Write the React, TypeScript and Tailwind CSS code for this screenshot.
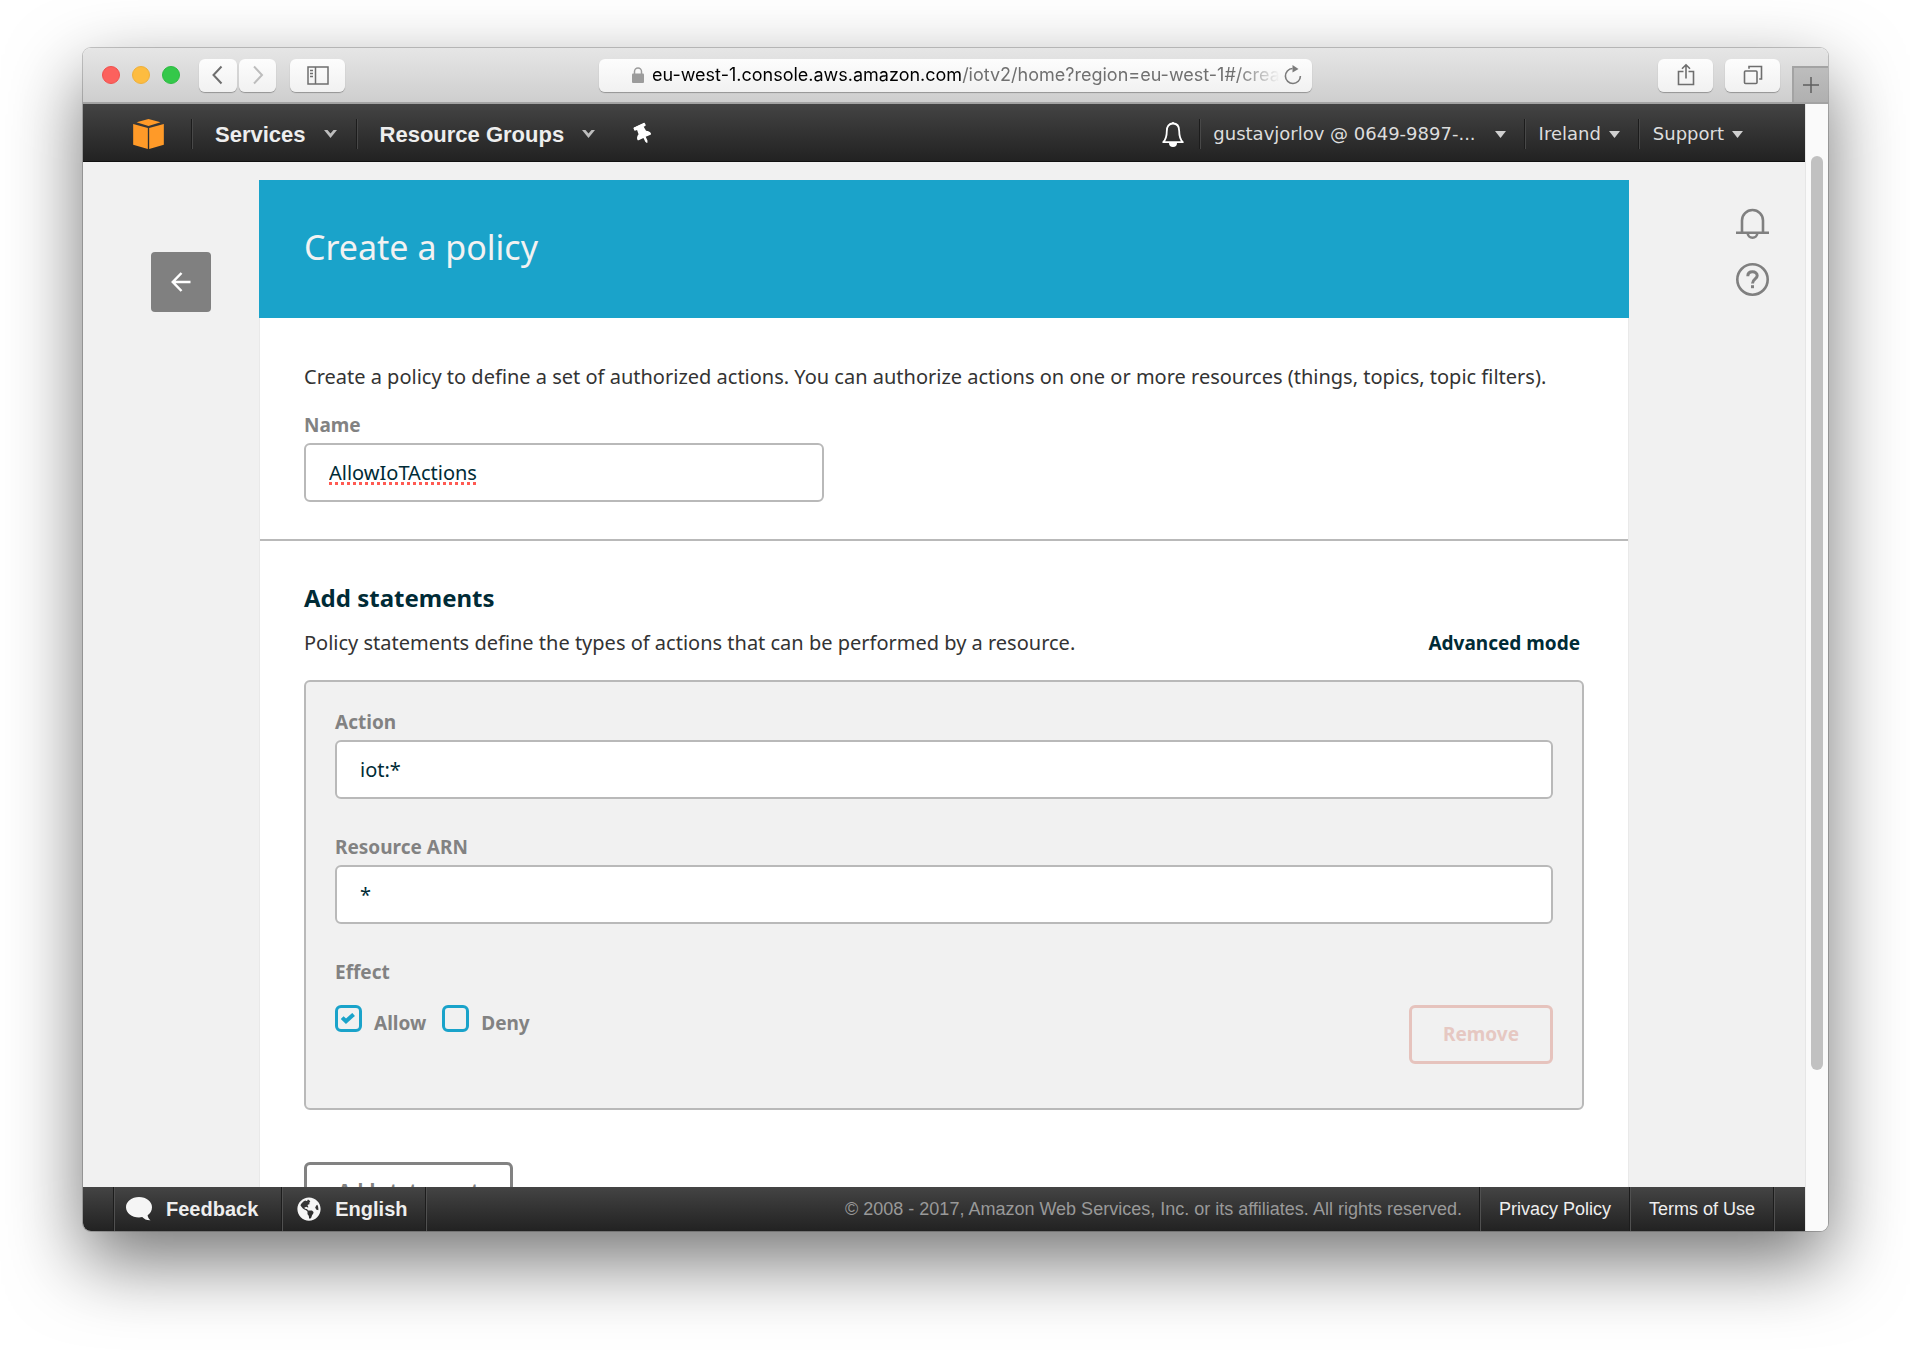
import { useState } from 'react';
import type { ReactNode } from 'react';
import { FaGlobeAmericas, FaThumbtack } from 'react-icons/fa';

function ToolbarButton({ label, className, children }: { label: string; className: string; children: ReactNode }) {
	return (
		<button
			type="button"
			aria-label={label}
			className={`flex h-[33px] items-center justify-center rounded-md bg-gradient-to-b from-[#fdfdfd] to-[#f1f1f1] shadow-[0_1px_1px_rgba(0,0,0,0.3)] ${className}`}
		>
			{children}
		</button>
	);
}

function TitleBar() {
	return (
		<div className="grid h-14 shrink-0 grid-cols-[1fr_713px_1fr] items-center border-b-2 border-[#a3a3a3] bg-gradient-to-b from-[#e6e6e6] to-[#cecece]">
			<div className="flex items-center pl-[19px]">
				<div className="flex gap-3">
					<span className="size-[18px] rounded-full border border-[#f0504d] bg-[#fc615d]" />
					<span className="size-[18px] rounded-full border border-[#eeb03a] bg-[#fdbc40]" />
					<span className="size-[18px] rounded-full border border-[#2cbb41] bg-[#34c84a]" />
				</div>
				<div className="ml-[19px] flex gap-[2px]">
					<ToolbarButton label="Back" className="w-[38px]">
						<svg width="12" height="20" viewBox="0 0 12 20" fill="none" stroke="#6e6e6e" strokeWidth="2">
							<path d="M9.500 1.500 1.500 10l8 8.500" />
						</svg>
					</ToolbarButton>
					<ToolbarButton label="Forward" className="w-[37px]">
						<svg width="12" height="20" viewBox="0 0 12 20" fill="none" stroke="#bdbdbd" strokeWidth="2">
							<path d="M2 1.500 10 10l-8 8.500" />
						</svg>
					</ToolbarButton>
				</div>
				<ToolbarButton label="Show sidebar" className="ml-[14px] w-[55px]">
					<svg width="22" height="19" viewBox="0 0 22 19" fill="none" stroke="#6e6e6e" strokeWidth="1.500">
						<path d="M1 1h20v17H1zM8.500 1v17M3 4.500h3M3 7.500h3M3 10.500h3" />
					</svg>
				</ToolbarButton>
			</div>
			<div className="flex h-[33px] items-center rounded-md bg-gradient-to-b from-[#fdfdfd] to-[#f1f1f1] pr-[10px] pl-[33px] shadow-[0_1px_1px_rgba(0,0,0,0.3)]">
				<svg width="12" height="16" viewBox="0 0 12 16" className="shrink-0">
					<rect x="0" y="6.500" width="12" height="9.500" rx="1" fill="#9b9b9b" />
					<path d="M2.500 7V4.500a3.500 3.500 0 0 1 7 0V7" fill="none" stroke="#9b9b9b" strokeWidth="1.500" />
				</svg>
				<div className="ml-2 flex-1 font-['Inter',sans-serif] text-lg leading-7 whitespace-nowrap text-[#707070] [mask-image:linear-gradient(to_right,black_93%,transparent)]">
					<span className="text-black">eu-west-1.console.aws.amazon.com</span>
					/iotv2/home?region=eu-west-1#/crea
				</div>
				<button type="button" aria-label="Reload" className="ml-1">
					<svg width="18" height="20" viewBox="0 0 18 20">
						<path d="M8.500 3.500a7.500 7.500 0 1 0 7.900 7.500" fill="none" stroke="#7b7b7b" strokeWidth="1.600" />
						<path d="M8.500 0v7.500L14.500 4z" fill="#7b7b7b" />
					</svg>
				</button>
			</div>
			<div className="flex h-full items-center justify-end gap-3">
				<ToolbarButton label="Share" className="w-[55px]">
					<svg width="18" height="24" viewBox="0 0 18 24" fill="none" stroke="#6e6e6e" strokeWidth="1.600">
						<path d="M6.500 8.500H1.500v13h15v-13h-5M9 15.500V2M5 5.800 9 1.800l4 4" />
					</svg>
				</ToolbarButton>
				<ToolbarButton label="Tabs" className="w-[55px]">
					<svg width="20" height="20" viewBox="0 0 20 20" fill="none" stroke="#6e6e6e" strokeWidth="1.600">
						<rect x="1.500" y="6" width="12.500" height="12.500" rx="1" />
						<path d="M6 3.800V1.500h12.500V14h-2.300" />
					</svg>
				</ToolbarButton>
				<button
					type="button"
					aria-label="New tab"
					className="flex h-9 w-9 items-center justify-center self-end border-t-2 border-l-2 border-[#a3a3a3] bg-gradient-to-b from-[#bdbdbd] to-[#b0b0b0]"
				>
					<svg width="18" height="18" viewBox="0 0 18 18" stroke="#5f5f5f" strokeWidth="1.500">
						<path d="M9 1v16M1 9h16" />
					</svg>
				</button>
			</div>
		</div>
	);
}

function Divider() {
	return <span className="h-[30px] w-[2px] border-l border-[#1c1c1c] bg-[#484848]" />;
}

function Caret() {
	return (
		<svg width="11" height="7" viewBox="0 0 11 7" fill="#cfcfcf">
			<path d="M0 0h11L5.500 7z" />
		</svg>
	);
}

function Chevron() {
	return (
		<svg width="13" height="8" viewBox="0 0 13 8" fill="#bdbdbd">
			<path d="M0 0h3.500l3 3.500L9.500 0H13L6.500 8z" />
		</svg>
	);
}

function ConsoleNav() {
	return (
		<nav className="flex h-[58px] shrink-0 items-center justify-between border-b border-[#111] bg-gradient-to-b from-[#444] to-[#222] pt-[3px] pr-[62px] pl-[50px] [text-shadow:0_2px_1px_#000]">
			<div className="flex items-center font-['Liberation_Sans',Arial,sans-serif] text-[22px] font-bold text-[#eee]">
				<a href="#home" aria-label="AWS home" className="mr-[27px]">
					<svg width="31" height="30" viewBox="0 0 92 90" fill="#ff9a28">
						<path d="M10 10 46 0l36 10-36 11zM0 15l44 12v63L0 77zM48 27l44-12v62L48 90z" />
					</svg>
				</a>
				<Divider />
				<button type="button" className="flex items-center gap-[18px] pr-[19px] pl-[22px]">
					Services
					<Chevron />
				</button>
				<Divider />
				<button type="button" className="flex items-center gap-[18px] pr-[19px] pl-[22px]">
					Resource Groups
					<Chevron />
				</button>
				<button type="button" aria-label="Pin shortcuts" className="ml-[19px]">
					<FaThumbtack className="size-5 -rotate-[25deg] text-white" />
				</button>
			</div>
			<div className="flex items-center font-['DejaVu_Sans',Verdana,sans-serif] text-lg text-[#ddd]">
				<button type="button" aria-label="Notifications" className="mr-[14px]">
					<svg width="24" height="26" viewBox="0 0 24 26">
						<path
							d="M12 2.500c-4.200 0-6.200 3-6.200 7.500 0 6-1 8.500-3.600 11.200h19.600C19.200 18.500 18.200 16 18.200 10c0-4.500-2-7.500-6.200-7.500z"
							fill="none"
							stroke="#fff"
							strokeWidth="1.800"
							strokeLinejoin="round"
						/>
						<path d="M8 22h8a4 4 0 0 1-8 0zM10.500 2.500a1.500 1.500 0 0 1 3 0z" fill="#fff" />
					</svg>
				</button>
				<Divider />
				<button type="button" className="flex items-center gap-[19px] pr-[18px] pl-3">
					gustavjorlov @ 0649-9897-...
					<Caret />
				</button>
				<Divider />
				<button type="button" className="flex items-center gap-2 pr-[18px] pl-[13px]">
					Ireland
					<Caret />
				</button>
				<Divider />
				<button type="button" className="flex items-center gap-2 pl-[13px]">
					Support
					<Caret />
				</button>
			</div>
		</nav>
	);
}

interface FieldProps {
	id: string;
	label: string;
	value: string;
	className?: string;
	inputClassName?: string;
}

function Field({ id, label, value, className = '', inputClassName = '' }: FieldProps) {
	const [text, setText] = useState(value);
	return (
		<div className={`flex flex-col gap-1 ${className}`}>
			<label htmlFor={id} className="text-[19px] leading-7 font-bold text-[#828282]">
				{label}
			</label>
			<input
				id={id}
				type="text"
				spellCheck={false}
				value={text}
				onChange={(e) => setText(e.target.value)}
				className={`h-[59px] rounded-md border-2 border-[#b9b9b9] bg-white px-[23px] text-xl text-[#002b36] outline-none ${inputClassName}`}
			/>
		</div>
	);
}

function Checkbox({ label, defaultChecked }: { label: string; defaultChecked?: boolean }) {
	return (
		<label className="flex items-start gap-3 text-[19px] leading-7 font-bold text-[#828282]">
			<span className="relative size-[27px]">
				<input
					type="checkbox"
					defaultChecked={defaultChecked}
					className="peer block size-[27px] appearance-none rounded-md border-3 border-[#1aa3ca]"
				/>
				<svg
					viewBox="0 0 14 11"
					className="pointer-events-none absolute top-2 left-1.5 hidden h-[11px] w-[14px] peer-checked:block"
					fill="none"
					stroke="#1aa3ca"
					strokeWidth="4"
				>
					<path d="M1.200 4.600 5 8.200 12.600 1.400" />
				</svg>
			</span>
			<span className="pt-1">{label}</span>
		</label>
	);
}

function PolicyForm() {
	return (
		<main className="flex-1 self-stretch border-x border-[#e9e9e9] bg-white">
			<header className="-mx-px flex h-[138px] items-center bg-[#1aa3ca] px-[45px] pb-1">
				<h1 className="text-[34px] text-[#f2f2f2]">Create a policy</h1>
			</header>
			<section className="border-b-2 border-[#b9b9b9] px-11 pt-[45px] pb-[37px]">
				<p className="text-xl leading-7 whitespace-nowrap text-[#333]">
					Create a policy to define a set of authorized actions. You can authorize actions on one or more resources
					(things, topics, topic filters).
				</p>
				<Field
					id="policy-name"
					label="Name"
					value="AllowIoTActions"
					className="mt-5 w-[520px]"
					inputClassName="underline decoration-[#ff5a52] decoration-dotted decoration-3 underline-offset-2 [text-decoration-skip-ink:none]"
				/>
			</section>
			<section className="px-11 pt-[41px]">
				<h2 className="text-2xl leading-8 font-bold text-[#002b36]">Add statements</h2>
				<div className="mt-[15px] flex items-center justify-between pr-1">
					<p className="text-xl leading-7 text-[#333]">
						Policy statements define the types of actions that can be performed by a resource.
					</p>
					<a href="#advanced" className="text-[19px] leading-7 font-bold text-[#002b36]">
						Advanced mode
					</a>
				</div>
				<div className="mt-[23px] rounded-md border-2 border-[#b9b9b9] bg-[#f1f1f1] px-[29px] pt-[26px] pb-11">
					<Field id="action" label="Action" value="iot:*" />
					<Field id="resource-arn" label="Resource ARN" value="*" className="mt-[34px]" />
					<fieldset className="mt-[34px]">
						<legend className="text-[19px] leading-7 font-bold text-[#828282]">Effect</legend>
						<div className="mt-[19px] flex items-start justify-between">
							<div className="flex gap-4">
								<Checkbox label="Allow" defaultChecked />
								<Checkbox label="Deny" />
							</div>
							<button
								type="button"
								className="h-[59px] rounded-md border-3 border-[#e6c3bd] px-[31px] text-[19px] font-bold text-[#e6c8c2]"
							>
								Remove
							</button>
						</div>
					</fieldset>
				</div>
				<button
					type="button"
					className="mt-[52px] h-[59px] rounded-md border-3 border-[#828282] px-[31px] text-[19px] font-bold text-[#828282]"
				>
					Add statement
				</button>
			</section>
		</main>
	);
}

function FooterRule() {
	return <span className="w-[2px] self-stretch border-l border-[#1c1c1c] bg-[#505050]" />;
}

function ConsoleFooter() {
	return (
		<footer className="flex h-11 shrink-0 items-center justify-between bg-gradient-to-b from-[#444] to-[#222] px-[30px] font-['Liberation_Sans',Arial,sans-serif] text-lg text-[#eee]">
			<div className="flex items-center self-stretch text-xl font-bold">
				<FooterRule />
				<button type="button" className="flex items-center gap-[14px] pr-[23px] pl-[11px]">
					<svg width="26" height="24" viewBox="0 0 26 24" fill="#f5f5f5">
						<path d="M13 0c7.200 0 13 4.500 13 10.200 0 3.600-1.800 6.300-4.400 8 .3 2 1.200 3.700 2.900 5.100-3.600.2-6.300-1-8.300-3.200-1 .2-2.100.3-3.200.3C5.800 20.400 0 15.900 0 10.200S5.800 0 13 0z" />
					</svg>
					Feedback
				</button>
				<FooterRule />
				<button type="button" className="flex items-center gap-[14px] pr-[17px] pl-[14px]">
					<FaGlobeAmericas className="size-6 text-[#f5f5f5]" />
					English
				</button>
				<FooterRule />
			</div>
			<div className="flex items-center self-stretch">
				<p className="pr-[17px] text-[#999]">
					© 2008 - 2017, Amazon Web Services, Inc. or its affiliates. All rights reserved.
				</p>
				<FooterRule />
				<a href="#privacy" className="px-[18px]">
					Privacy Policy
				</a>
				<FooterRule />
				<a href="#terms" className="px-[18px]">
					Terms of Use
				</a>
				<FooterRule />
			</div>
		</footer>
	);
}

export default function App() {
	return (
		<div className="h-screen bg-white pt-12 pr-[82px] pb-[119px] pl-[83px] font-['Noto_Sans',sans-serif]">
			<div className="flex h-full flex-col overflow-hidden rounded-lg shadow-[0_0_0_1px_rgba(0,0,0,0.2),0_30px_75px_rgba(0,0,0,0.55)]">
				<TitleBar />
				<div className="flex min-h-0 flex-1 bg-[#fafafa]">
					<div className="flex min-w-0 flex-1 flex-col">
						<ConsoleNav />
						<div className="flex min-h-0 flex-1 overflow-hidden bg-[#f1f1f1] pt-[18px]">
							<div className="w-44 shrink-0 pt-[72px] pl-[68px]">
								<button
									type="button"
									aria-label="Go back"
									className="flex size-[60px] items-center justify-center rounded bg-[#808080]"
								>
									<svg width="20" height="20" viewBox="0 0 20 20" fill="none" stroke="#fff" strokeWidth="2.500">
										<path d="M19.500 10H2M10.500 1 1.800 10l8.700 9" />
									</svg>
								</button>
							</div>
							<PolicyForm />
							<div className="flex w-44 shrink-0 flex-col items-end gap-[23px] pt-7 pr-9 text-[#808080]">
								<button type="button" aria-label="Notifications">
									<svg width="33" height="32" viewBox="0 0 33 32" fill="none" stroke="currentColor" strokeWidth="2.600">
										<path d="M6 24.500V12.500a10.500 10.500 0 0 1 21 0v12M0 24.700h33M11.700 25a4.800 4.800 0 0 0 9.600 0" />
									</svg>
								</button>
								<button type="button" aria-label="Help">
									<svg width="33" height="33" viewBox="0 0 33 33" fill="none" stroke="currentColor" strokeWidth="2.600">
										<circle cx="16.500" cy="16.500" r="15.200" />
										<path d="M11.800 13.200c0-2.800 2-4.400 4.700-4.400s4.700 1.600 4.700 4c0 3.200-4.700 3.200-4.700 7.700" strokeWidth="3" />
										<path d="M16.500 22.200v3" strokeWidth="3" />
									</svg>
								</button>
							</div>
						</div>
						<ConsoleFooter />
					</div>
					<div className="w-[23px] shrink-0 border-l border-[#e6e6e6] pt-[52px] pl-[5px]">
						<div className="h-[85%] w-3 rounded-full bg-[#c1c1c1]" />
					</div>
				</div>
			</div>
		</div>
	);
}
